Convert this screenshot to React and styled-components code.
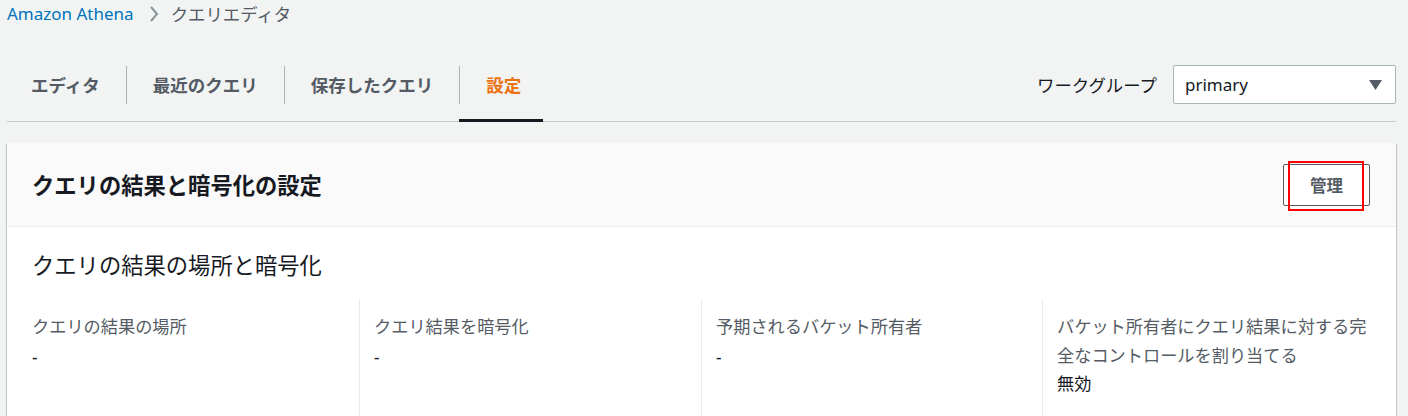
import React from "react";
import styled, { createGlobalStyle } from "styled-components";

const Global = createGlobalStyle`
  html, body { margin: 0; padding: 0; background: #f2f3f3; }
  body {
    font-family: "Noto Sans", "Noto Sans CJK JP", sans-serif;
    color: #16191f;
    -webkit-font-smoothing: antialiased;
  }
  * { box-sizing: border-box; }
`;

const Page = styled.div`
  padding: 0 12px 0 7px;
  width: 1408px;
  height: 416px;
  overflow: hidden;
`;

const Breadcrumbs = styled.nav`
  display: flex;
  align-items: center;
  height: 28px;
  font-size: 17px;
  line-height: 28px;
`;

const Crumb = styled.span`
  color: ${(p) => (p.$link ? "#0073bb" : "#545b64")};
  font-size: ${(p) => (p.$link ? "17px" : "17.4px")};
`;

const CrumbSep = styled.span`
  display: inline-flex;
  margin: 0 12px 0 15px;
`;

const TabBar = styled.div`
  margin-top: 34px;
  display: flex;
  justify-content: space-between;
  align-items: flex-start;
  border-bottom: 1px solid #c3cbcb;
`;

const Tabs = styled.div`
  display: flex;
`;

const Tab = styled.div`
  padding: 4px 0 15px;
  border-bottom: 3px solid ${(p) => (p.$active ? "#16191f" : "transparent")};
  margin-bottom: -1px;
`;

const TabText = styled.div`
  height: 38px;
  line-height: 38px;
  padding: 0 26px;
  font-size: 17.5px;
  font-weight: 700;
  color: ${(p) => (p.$active ? "#ec7211" : "#545b64")};
  border-left: 1px solid ${(p) => (p.$first ? "transparent" : "#aab7b8")};
  ${(p) => p.$first && "padding-left: 23px;"}
  ${(p) => p.$active && "padding-right: 22px;"}
`;

const Workgroup = styled.div`
  display: flex;
  align-items: center;
  gap: 16px;
  margin-top: 3px;
`;

const WgLabel = styled.span`
  font-size: 17.4px;
  color: #16191f;
`;

const Select = styled.div`
  width: 223px;
  height: 39px;
  background: #fff;
  border: 1px solid #aab7b8;
  border-radius: 2px;
  display: flex;
  align-items: center;
  justify-content: space-between;
  padding: 0 13px 0 11px;
  font-size: 17px;
  color: #16191f;
`;

const Card = styled.section`
  margin-top: 21px;
  background: #fff;
  box-shadow: 0 1px 1px 0 rgba(0, 28, 36, 0.3), 1px 1px 1px 0 rgba(0, 28, 36, 0.15),
    -1px 1px 1px 0 rgba(0, 28, 36, 0.15);
  height: 400px;
`;

const CardHeader = styled.header`
  height: 84px;
  background: #fafafa;
  border-bottom: 1px solid #eaeded;
  display: flex;
  align-items: center;
  justify-content: space-between;
  padding: 0 26px 0 25px;
`;

const CardTitle = styled.h2`
  margin: 0;
  font-size: 22.3px;
  font-weight: 700;
  color: #16191f;
`;

const ButtonWrap = styled.div`
  position: relative;
`;

const Button = styled.button`
  width: 87px;
  height: 42px;
  background: #fff;
  border: 1px solid #545b64;
  border-radius: 2px;
  font-family: inherit;
  font-size: 16.5px;
  font-weight: 700;
  color: #545b64;
  padding: 0;
`;

const Highlight = styled.div`
  position: absolute;
  left: 5px;
  top: -3px;
  width: 76px;
  height: 50px;
  border: 2px solid #ff0000;
  pointer-events: none;
`;

const CardBody = styled.div`
  padding: 22px 25px 0;
`;

const SubTitle = styled.h3`
  margin: 0;
  font-size: 22.3px;
  font-weight: 400;
  line-height: 34px;
  color: #16191f;
`;

const Columns = styled.div`
  margin-top: 16px;
  display: grid;
  grid-template-columns: 327fr 342fr 341fr 329fr;
`;

const Column = styled.div`
  padding: 14px 0 20px ${(p) => (p.$first ? "0" : "14px")};
  border-left: ${(p) => (p.$first ? "none" : "1px solid #eaeded")};
  min-height: 120px;
  font-size: 17.2px;
  line-height: 28.5px;
`;

const Label = styled.div`
  color: #545b64;
`;

const Value = styled.div`
  color: #16191f;
  margin-top: ${(p) => (p.$dash ? "2px" : "0")};
`;

const Chevron = () => (
  <svg width="10" height="16" viewBox="0 0 10 16">
    <polyline points="2,1 8,8 2,15" fill="none" stroke="#879596" strokeWidth="2" />
  </svg>
);

const Caret = () => (
  <svg width="13" height="10" viewBox="0 0 13 10">
    <polygon points="0,0 13,0 6.5,10" fill="#545b64" />
  </svg>
);

const tabs = ["エディタ", "最近のクエリ", "保存したクエリ", "設定"];

const fields = [
  { label: "クエリの結果の場所", value: "-" },
  { label: "クエリ結果を暗号化", value: "-" },
  { label: "予期されるバケット所有者", value: "-" },
  { label: "バケット所有者にクエリ結果に対する完全なコントロールを割り当てる", value: "無効" },
];

export default function App() {
  return (
    <>
      <Global />
      <Page>
        <Breadcrumbs>
          <Crumb $link>Amazon Athena</Crumb>
          <CrumbSep>
            <Chevron />
          </CrumbSep>
          <Crumb>クエリエディタ</Crumb>
        </Breadcrumbs>

        <TabBar>
          <Tabs>
            {tabs.map((t, i) => (
              <Tab key={t} $active={i === 3}>
                <TabText $first={i === 0} $active={i === 3}>
                  {t}
                </TabText>
              </Tab>
            ))}
          </Tabs>
          <Workgroup>
            <WgLabel>ワークグループ</WgLabel>
            <Select>
              <span>primary</span>
              <Caret />
            </Select>
          </Workgroup>
        </TabBar>

        <Card>
          <CardHeader>
            <CardTitle>クエリの結果と暗号化の設定</CardTitle>
            <ButtonWrap>
              <Button>管理</Button>
              <Highlight />
            </ButtonWrap>
          </CardHeader>
          <CardBody>
            <SubTitle>クエリの結果の場所と暗号化</SubTitle>
            <Columns>
              {fields.map((f, i) => (
                <Column key={f.label} $first={i === 0}>
                  <Label>{f.label}</Label>
                  <Value $dash={f.value === "-"}>{f.value}</Value>
                </Column>
              ))}
            </Columns>
          </CardBody>
        </Card>
      </Page>
    </>
  );
}
